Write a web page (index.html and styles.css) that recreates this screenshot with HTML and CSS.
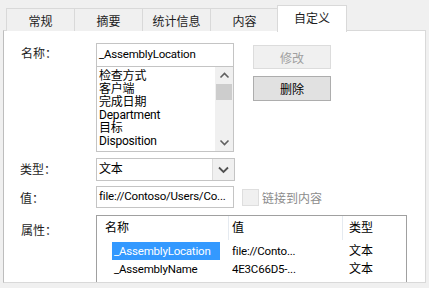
FILE: index.html
```html
<!DOCTYPE html>
<html>
<head>
<meta charset="utf-8">
<link rel="stylesheet" href="styles.css">
</head>
<body>
<div class="tabs">
  <div class="tab first">常规</div>
  <div class="tab">摘要</div>
  <div class="tab">统计信息</div>
  <div class="tab">内容</div>
  <div class="tab selected">自定义</div>
</div>
<div class="panel">
  <div class="row row-name">
    <div class="label label-name">名称：</div>
    <div class="col">
      <div class="input name-input">_AssemblyLocation</div>
      <div class="listbox">
        <div class="items">
          <div>检查方式</div>
          <div>客户端</div>
          <div>完成日期</div>
          <div>Department</div>
          <div>目标</div>
          <div>Disposition</div>
        </div>
        <div class="scrollbar">
          <svg class="arrow" width="17" height="17" viewBox="0 0 17 17"><polyline points="4.5,10.5 8.5,6.5 12.5,10.5" fill="none" stroke="#606060" stroke-width="1.6"/></svg>
          <div class="thumb"></div>
          <div class="track"></div>
          <svg class="arrow" width="17" height="17" viewBox="0 0 17 17"><polyline points="4.5,6.5 8.5,10.5 12.5,6.5" fill="none" stroke="#606060" stroke-width="1.6"/></svg>
        </div>
      </div>
    </div>
    <div class="buttons">
      <div class="btn disabled">修改</div>
      <div class="btn">删除</div>
    </div>
  </div>
  <div class="row row-type">
    <div class="label">类型：</div>
    <div class="select">
      <div class="select-text">文本</div>
      <div class="select-btn">
        <svg width="21" height="21" viewBox="0 0 21 21"><polyline points="6,8.5 10.5,13 15,8.5" fill="none" stroke="#505050" stroke-width="1.8"/></svg>
      </div>
    </div>
  </div>
  <div class="row row-value">
    <div class="label">值：</div>
    <div class="input value-input">file://Contoso/Users/Co...</div>
    <div class="check"></div>
    <div class="check-label">链接到内容</div>
  </div>
  <div class="row row-props">
    <div class="label label-props">属性：</div>
    <div class="props">
      <div class="props-head">
        <div class="c-name">名称</div>
        <div class="c-val">值</div>
        <div class="c-type">类型</div>
      </div>
      <div class="props-row">
        <div class="c-name"><span class="hl">_AssemblyLocation</span></div>
        <div class="c-val">file://Conto...</div>
        <div class="c-type">文本</div>
      </div>
      <div class="props-row">
        <div class="c-name"><span class="nm">_AssemblyName</span></div>
        <div class="c-val">4E3C66D5-...</div>
        <div class="c-type">文本</div>
      </div>
    </div>
  </div>
</div>
</body>
</html>
```

FILE: styles.css
```css
* { box-sizing: border-box; }
html, body { margin: 0; padding: 0; }
body {
  width: 429px;
  height: 288px;
  overflow: hidden;
  background: #f0f0f0;
  font-family: Roboto, "Noto Sans CJK SC", sans-serif;
  font-size: 11.5px;
  letter-spacing: -0.2px;
  color: #000;
}
.tabs {
  display: flex;
  align-items: flex-end;
  height: 31px;
  padding-left: 6px;
}
.tab {
  height: 23px;
  width: 69px;
  margin-left: -1px;
  border: 1px solid #d9d9d9;
  border-bottom: none;
  background: #f0f0f0;
  display: flex;
  align-items: center;
  justify-content: center;
  color: #1e1e1e;
  font-size: 12px;
  letter-spacing: 0;
}
.tab.first { margin-left: 0; }
.tab.selected {
  position: relative;
  z-index: 2;
  height: 27px;
  margin-bottom: -1px;
  margin-left: -2px;
  width: 70px;
  background: #fff;
  padding-bottom: 3px;
}
.panel {
  margin-top: -1px;
  margin-left: 3px;
  width: 423px;
  height: 253px;
  background: #fff;
  border: 1px solid #d9d9d9;
  border-left-color: #bdbdbd;
  padding-top: 12px;
  overflow: hidden;
}
.row { display: flex; align-items: flex-start; }
.label {
  width: 92px;
  padding-left: 16px;
  color: #1e1e1e;
  font-size: 12px;
  letter-spacing: 0;
}
.label-name { padding-left: 17px; padding-top: 1px; }
.col { display: flex; flex-direction: column; width: 138px; }
.input {
  border: 1px solid #c4c4c4;
  background: #fff;
  padding-left: 2px;
  white-space: nowrap;
  overflow: hidden;
}
.name-input { height: 24px; line-height: 21px; }
.listbox {
  margin-top: -1px;
  height: 86px;
  border: 1px solid #c4c4c4;
  display: flex;
}
.items {
  flex: 1;
  padding-top: 3px;
  padding-left: 2px;
  line-height: 13px;
  overflow: hidden;
  font-size: 12px;
}
.scrollbar {
  width: 18px;
  background: #f0f0f0;
  display: flex;
  flex-direction: column;
  align-items: center;
}
.arrow { display: block; flex: none; }
.thumb {
  width: 16px;
  height: 16px;
  background: #cdcdcd;
}
.track { flex: 1; }
.buttons {
  margin-left: 19px;
  padding-top: 2px;
  display: flex;
  flex-direction: column;
  gap: 7px;
}
.btn {
  width: 78px;
  height: 24px;
  border: 1px solid #adadad;
  background: #e1e1e1;
  display: flex;
  align-items: center;
  justify-content: center;
  font-size: 12px;
  letter-spacing: 0;
}
.btn + .btn { height: 25px; }
.btn.disabled {
  border-color: #dcdcdc;
  background: #f0f0f0;
  color: #a0a0a0;
}
.row-type { margin-top: 6px; }
.row-type .label { padding-top: 2px; }
.select {
  width: 139px;
  height: 23px;
  border: 1px solid #c4c4c4;
  display: flex;
}
.select-text { flex: 1; padding-left: 2px; line-height: 20px; font-size: 12px; }
.select-btn {
  width: 22px;
  border-left: 1px solid #dcdcdc;
  background: #f0f0f0;
  display: flex;
  align-items: center;
  justify-content: center;
}
.select-btn svg { display: block; }
.row-value { margin-top: 5px; align-items: center; }
.row-value .label { padding-top: 0; }
.value-input { width: 138px; height: 22px; line-height: 19px; }
.check {
  margin-left: 8px;
  width: 17px;
  height: 17px;
  border: 1px solid #dedede;
  background: #f0f0f0;
}
.check-label { margin-left: 3px; color: #8c8c8c; font-size: 12px; letter-spacing: 0; }
.row-props { margin-top: 7px; }
.label-props { padding-left: 17px; padding-top: 6px; }
.props {
  width: 311px;
  height: 80px;
  border: 1px solid #a0a0a0;
  border-bottom: none;
}
.props-head, .props-row { display: flex; }
.props-head { height: 24px; align-items: center; font-size: 12px; letter-spacing: 0; }
.props-head > div { height: 24px; line-height: 24px; }
.props-head .c-name, .props-head .c-val { border-right: 1px solid #e5eaf0; }
.c-name { width: 132px; padding-left: 8px; }
.c-val { width: 114px; padding-left: 3px; }
.c-type { flex: 1; padding-left: 6px; }
.props-row .c-type { font-size: 12px; letter-spacing: 0; }
.props-row { height: 18px; line-height: 18px; }
.props-row:nth-child(2) { margin-top: 2px; }
.props-row .c-name { padding-left: 15px; }
.hl {
  display: inline-block;
  width: 108px;
  background: #3399ff;
  color: #fff;
  padding-left: 2px;
}
.nm { padding-left: 2px; }
```
